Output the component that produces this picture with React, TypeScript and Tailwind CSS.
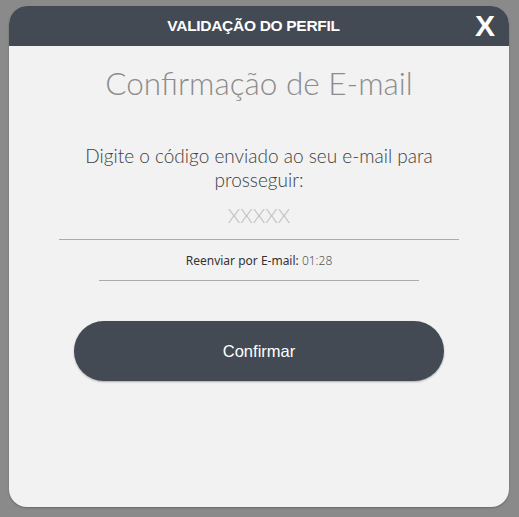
import React from "react";

export default function App() {
  return (
    <div className="w-[519px] h-[517px] bg-[#8a8a8a] pt-[6px] pl-[9px] overflow-hidden">
      <div className="w-[500px] h-[501px] rounded-[18px] bg-[#f2f2f2] overflow-hidden flex flex-col items-center shadow-[0_1px_2px_rgba(0,0,0,0.25)]">
        <div className="relative w-full h-[40px] shrink-0 bg-[#434a54] flex items-center justify-center pr-[11px]">
          <span className="text-white text-[15.5px] font-bold tracking-[-0.3px]" style={{ fontFamily: '"Liberation Sans", Arial, sans-serif' }}>
            VALIDAÇÃO DO PERFIL
          </span>
          <span className="absolute right-[14px] top-[1px] text-white text-[30px] font-bold leading-[38px]" style={{ fontFamily: '"Liberation Sans", Arial, sans-serif' }}>
            X
          </span>
        </div>
        <h1 className="mt-[19px] text-[31.5px] leading-[36px] font-light text-[#8c8c8c]" style={{ fontFamily: 'Lato, "Open Sans", sans-serif' }}>
          Confirmação de E-mail
        </h1>
        <p className="mt-[43px] w-[400px] text-center text-[19px] leading-[24px] font-light text-[#404040]" style={{ fontFamily: 'Lato, "Open Sans", sans-serif' }}>
          Digite o código enviado ao seu e-mail para prosseguir:
        </p>
        <div className="mt-[4px] w-[400px] h-[44px] border-b border-[#ababab] flex items-center justify-center pb-[6px]">
          <span className="text-[20px] font-light text-[#bdbdbd]" style={{ fontFamily: 'Lato, "Open Sans", sans-serif' }}>XXXXX</span>
        </div>
        <div className="mt-[13px] w-[320px] pb-[11px] border-b border-[#ababab] flex justify-center">
          <span className="text-[12px] leading-[16px] text-[#333]" style={{ fontFamily: '"Noto Sans", "Open Sans", sans-serif' }}>
            <span className="font-normal">Reenviar por E-mail:</span> <span className="text-[#555] font-light">01:28</span>
          </span>
        </div>
        <button className="mt-[40px] w-[370px] h-[60px] rounded-full bg-[#434a54] text-white text-[16.5px] shadow-[0_1px_2px_rgba(0,0,0,0.3)]" style={{ fontFamily: '"Liberation Sans", Arial, sans-serif' }}>
          Confirmar
        </button>
      </div>
    </div>
  );
}
